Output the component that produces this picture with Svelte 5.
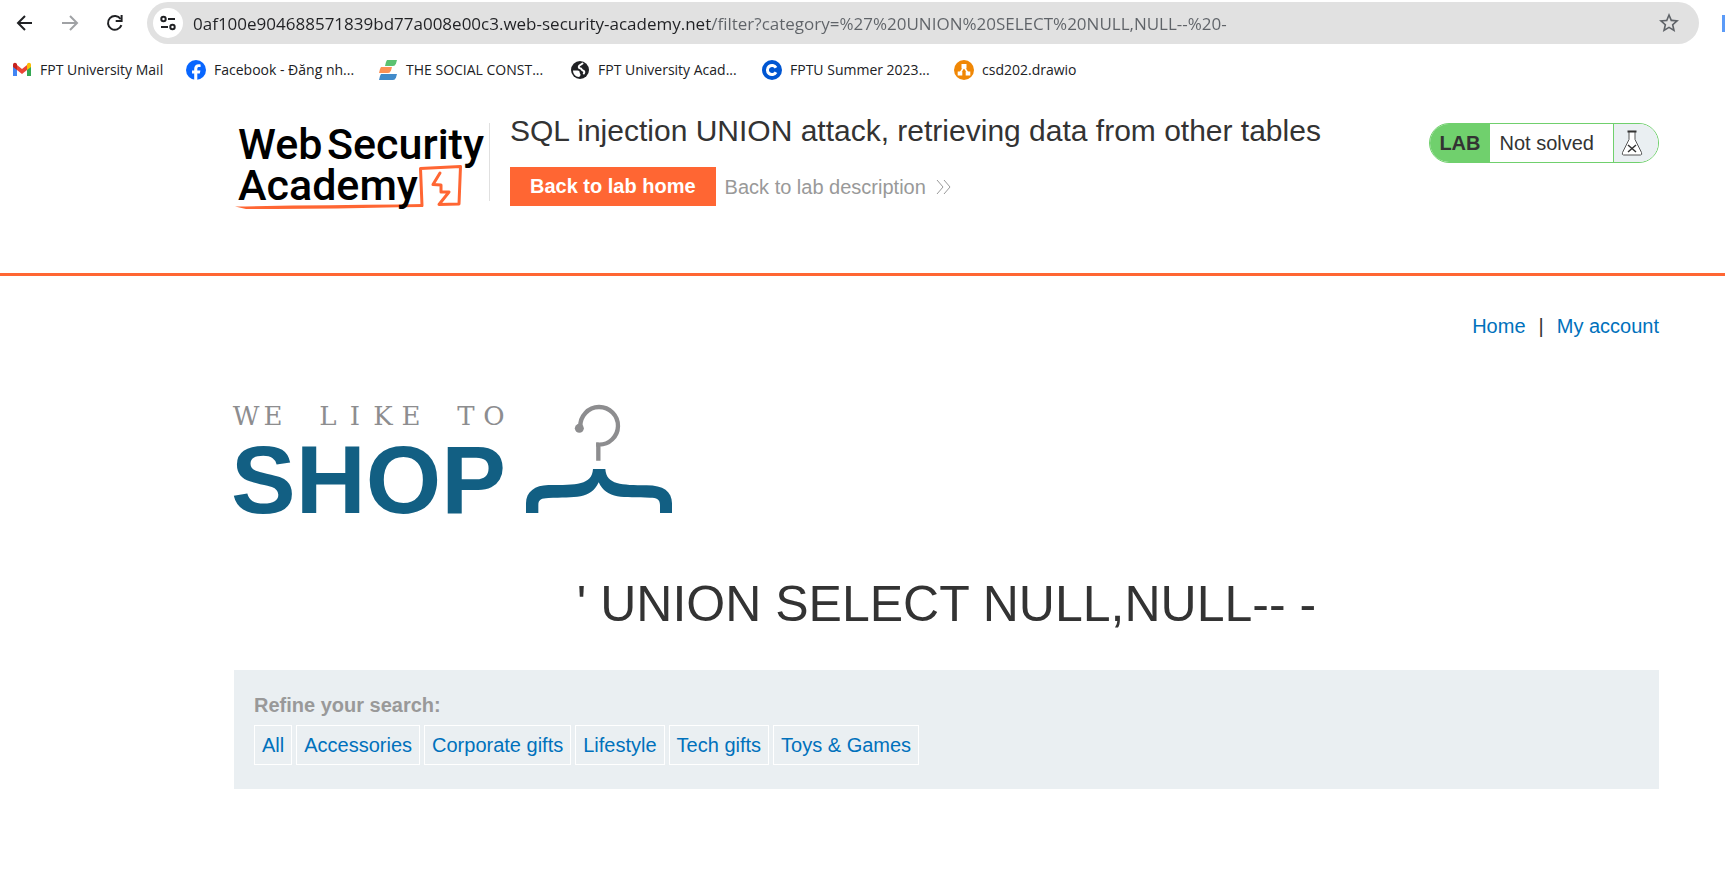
<script>
  const categories = ['All', 'Accessories', 'Corporate gifts', 'Lifestyle', 'Tech gifts', 'Toys & Games'];
  const bookmarks = [
    { icon: 'mail', label: 'FPT University Mail' },
    { icon: 'facebook', label: 'Facebook - Đăng nh...' },
    { icon: 'social', label: 'THE SOCIAL CONST...' },
    { icon: 'globe', label: 'FPT University Acad...' },
    { icon: 'course', label: 'FPTU Summer 2023...' },
    { icon: 'drawio', label: 'csd202.drawio' }
  ];
  const url = '0af100e904688571839bd77a008e00c3.web-security-academy.net/filter?category=%27%20UNION%20SELECT%20NULL,NULL--%20-';
</script>

<div class="browser">
  <div class="toolbar">
    <button class="tool" aria-label="Back">
      <svg width="18" height="18" viewBox="0 0 18 18" fill="none" stroke="#202124" stroke-width="2"><path d="M16 9H2.500M9 2 2 9l7 7" /></svg>
    </button>
    <button class="tool" aria-label="Forward">
      <svg width="18" height="18" viewBox="0 0 18 18" fill="none" stroke="#a0a2a5" stroke-width="2"><path d="M1 9h14.500M9 2l7 7-7 7" /></svg>
    </button>
    <button class="tool" aria-label="Reload">
      <svg width="18" height="18" viewBox="0 0 18 18"><path d="M15.400 11.200A6.900 6.900 0 1 1 14.600 5" fill="none" stroke="#202124" stroke-width="2" /><path d="M16.600 1v7H9.700V6h4.900V1z" fill="#202124" /></svg>
    </button>
    <div class="address">
      <button class="site" aria-label="View site information">
        <svg width="18" height="18" viewBox="0 0 18 18" fill="none" stroke="#202124" stroke-width="2"><circle cx="4.500" cy="5" r="2.200" /><path d="M9 5h7M2 13h7" /><circle cx="13.500" cy="13" r="2.200" /></svg>
      </button>
      <input class="url" aria-label="Address" value={url} />
      <button class="star" aria-label="Bookmark this page">
        <svg width="22" height="22" viewBox="1 1 22 22" fill="#5f6368"><path d="M22 9.240l-7.190-.62L12 2 9.190 8.630 2 9.240l5.460 4.730L5.820 21 12 17.270 18.180 21l-1.630-7.030L22 9.240zM12 15.400l-3.760 2.270 1-4.280-3.320-2.880 4.380-.38L12 6.100l1.710 4.040 4.380.38-3.320 2.880 1 4.280L12 15.400z" /></svg>
      </button>
    </div>
    <span class="extension"></span>
  </div>

  <nav class="bookmarks" aria-label="Bookmarks">
    {#each bookmarks as mark}
      <a href="#top">
        <svg width="20" height="20" viewBox="0 0 20 20">
          {#if mark.icon === 'mail'}
            <path d="M1 5v11h4V8z" fill="#4285f4" /><path d="M15 8v8h4V5z" fill="#34a853" />
            <path d="M5 5l5 4 5-4v5l-5 4-5-4z" fill="#ea4335" />
            <path d="M1 6V5c0-2 2-3 3.500-1.500L5 4v6L1 7z" fill="#c5221f" /><path d="M19 6V5c0-2-2-3-3.500-1.500L15 4v6l4-3z" fill="#fbbc04" />
          {:else if mark.icon === 'facebook'}
            <circle cx="10" cy="10" r="10" fill="#0866ff" />
            <path d="M8.200 20v-6.500H6v-3h2.200V9c0-3.300 1.500-4.800 4.600-4.800.6 0 1.400.1 1.800.2v2.700h-1.300c-1.500 0-2 .6-2 2v1.400h3.100l-.6 3h-2.500V20z" fill="#fff" />
          {:else if mark.icon === 'social'}
            <path d="M9 0h10l-1 3.500q-1 2.500-3 2.500H7l1-4z" fill="#5bc271" />
            <path d="M3 7h11l-1 3.500q-1 2.500-3 2.500H1l1-4z" fill="#fc9155" />
            <path d="M3 14h16l-1 3.500q-1 2.500-3 2.500H1l1-4z" fill="#428bca" />
          {:else if mark.icon === 'globe'}
            <circle cx="10" cy="10" r="9" fill="#202124" />
            <path d="M3 10.500h4.500c1.500 0 2.200.8 2.200 2s1 1.300.8 2.500-1 1.500-1.500 2C5.500 16.800 3 14 3 10.500z" fill="#fff" />
            <path d="M12.500 3.500 9.500 5.500c-1.200 1-.8 2.500.6 2.700 1.800.2 1.400 1.900 2.800 2.300 1.600.4 1.700 1.700.9 2.900" fill="none" stroke="#fff" stroke-width="2" stroke-linecap="round" />
          {:else if mark.icon === 'course'}
            <circle cx="10" cy="10" r="10" fill="#0056d2" />
            <path d="M14 7.700a4.600 4.600 0 1 0 0 4.600" fill="none" stroke="#fff" stroke-width="3" />
          {:else}
            <circle cx="10" cy="10" r="10" fill="#f08705" />
            <path d="M10 7 6 13M10 7l4 6" stroke="#fff" stroke-width="1.500" />
            <path d="M7.500 4h5v4.500h-5zM3.700 11.500h4.600v4H3.700zM11.700 11.500h4.600v4h-4.600z" fill="#fff" />
          {/if}
        </svg>
        <span>{mark.label}</span>
      </a>
    {/each}
  </nav>
</div>

<header class="lab-header">
  <a class="logo" href="#top" aria-label="Web Security Academy">
    <svg width="255" height="92" viewBox="0 0 255 92">
      <path d="M1 88.500Q90 87 165 86.500L189 86v3l-24 .3Q90 91.500 12 91z" fill="#ff6633" />
      <path d="M188 87.500 186.500 50.500 226.500 48.500 225 86 205 86.500 215 74H207V67L199 66.500 206 55" fill="none" stroke="#ff6633" stroke-width="3" stroke-linejoin="round" stroke-linecap="round" />
      <g class="wordmark">
        <text x="4" y="41">Web</text>
        <text x="93" y="41">Security</text>
        <text x="4" y="82">Academy</text>
      </g>
    </svg>
  </a>
  <div class="title">
    <h2>SQL injection UNION attack, retrieving data from other tables</h2>
    <div class="actions">
      <a class="button" href="#top">Back to lab home</a>
      <a class="description" href="#top">Back to lab description
        <svg width="15" height="16" viewBox="0 0 15 16" fill="none" stroke="#999" stroke-width="1"><path d="M1 1l6 7-6 7M8 1l6 7-6 7" /></svg>
      </a>
    </div>
  </div>
  <div class="status">
    <strong>LAB</strong>
    <span class="state">Not solved</span>
    <span class="flask">
      <svg width="22" height="26" viewBox="0 0 22 26"><path d="M8 1.500v8L1.500 22.500q-.8 2.500 1 2.500h17q1.800 0 1-2.500L14 9.500v-8" fill="#fff" stroke="#555" stroke-width="1" /><path d="M6.500 1.500h9" stroke="#333" stroke-width="2" /><path d="M7 15l8 7M15 15l-8 7" stroke="#333" stroke-width="1.500" /></svg>
    </span>
  </div>
</header>

<main>
  <nav class="account" aria-label="Account">
    <a href="#top">Home</a><span>|</span><a href="#top">My account</a>
  </nav>
  <svg class="shop" width="442" height="118" viewBox="0 0 442 118" role="img" aria-label="We like to shop">
    <text class="tagline" y="25" x="12 39 66 94 121 149 177 204 232 260">WE LIKE TO</text>
    <text class="brand" x="-3" y="113">SHOP</text>
    <g transform="translate(276 -5) scale(.33333)">
      <path d="M211 95A56.500 56.500 0 1 1 265 149V197" fill="none" stroke="#8d8d8f" stroke-width="13" />
      <path d="M258.500 142.500H266V155H258.500Z" fill="#8d8d8f" />
      <circle cx="208" cy="100" r="13.500" fill="#8d8d8f" />
      <path d="M48 354V325C48 290 75 271 115 270C200 270 246 270 249 222H286C289 270 335 270 410 271C460 271 486 290 486 325V354H450V330C450 313 440 308 420 308C340 306 290 314 266 262C243 314 195 306 115 309C95 310 85 313 85 330V354Z" fill="#125f83" />
    </g>
  </svg>
  <h1>' UNION SELECT NULL,NULL-- -</h1>
  <section class="filters">
    <strong>Refine your search:</strong>
    <div class="tags">
      {#each categories as category}
        <a href="#top">{category}</a>
      {/each}
    </div>
  </section>
</main>

<style>
  :global(body) {
    background: #fff;
    color: #333;
    font: 20px/24px "Liberation Sans", Arial, sans-serif;
  }
  a { color: #0071bc; text-decoration: none; }
  button { padding: 0; border: 0; background: none; display: grid; place-items: center; }

  .browser { font-family: "Open Sans", sans-serif; color: #202124; }
  .toolbar { display: flex; align-items: center; gap: 11px; height: 42px; padding: 2px 0 0 8px; }
  .tool { width: 34px; height: 34px; flex: none; }
  .address { flex: 1; display: flex; align-items: center; height: 42px; margin-left: 4px; padding: 0 19px 0 6px; border-radius: 21px; background: #e1e1e1; box-sizing: border-box; }
  .site { width: 30px; height: 30px; border-radius: 50%; background: #fff; flex: none; }
  .url {
    flex: 1;
    min-width: 0;
    height: 32px;
    margin-left: 10px;
    padding: 0;
    border: 0;
    outline: 0;
    font: 17px/24px "Open Sans", sans-serif;
    color: transparent;
    background: linear-gradient(90deg, #202124 519px, #5f6368 519px);
    -webkit-background-clip: text;
    background-clip: text;
  }
  .star { width: 22px; height: 22px; }
  .extension { width: 3px; height: 17px; margin-left: 12px; background: #5b9bf8; }

  .bookmarks { display: grid; grid-template-columns: 174px repeat(5, 192px); height: 52px; padding-left: 12px; }
  .bookmarks a { display: flex; align-items: center; gap: 8px; color: #202124; font-size: 14px; line-height: 20px; white-space: nowrap; }

  .lab-header { display: flex; align-items: flex-start; height: 155px; padding: 22px 66px 0 234px; border-bottom: 3px solid #ff6633; }
  .logo { flex: none; height: 78px; margin-top: 5px; border-right: 1px solid #e0e0e0; }
  .logo svg { display: block; overflow: visible; margin-top: -5px; }
  .wordmark { font: 500 43px Roboto, sans-serif; fill: #000; }
  .title { flex: 1; margin-left: 20px; }
  h2 { margin: 0; font-size: 30px; line-height: 26px; font-weight: 400; }
  .actions { display: flex; align-items: center; gap: 9px; margin-top: 23px; }
  .button { padding: 0 20px; background: #ff6633; color: #fff; font-weight: 700; line-height: 39px; }
  .description { display: flex; align-items: center; gap: 10px; color: #999; }
  .status { display: flex; height: 38px; margin-top: 5px; border: 1px solid #70d06d; border-radius: 20px; overflow: hidden; line-height: 38px; }
  .status strong { padding: 0 9px; background: #70d06d; }
  .state { padding: 0 19px 0 10px; border-right: 1px solid #70d06d; }
  .flask { display: flex; align-items: center; padding: 0 15px 0 7px; background: #eaeff2; }

  main { padding: 38px 66px 90px 234px; }
  .account { display: flex; justify-content: flex-end; gap: 13px; }
  .shop { display: block; margin-top: 62px; overflow: visible; }
  .tagline { font: 26px "DejaVu Serif", serif; fill: #8d8d8f; text-anchor: middle; }
  .brand { font: 700 97px "Liberation Sans", Arial, sans-serif; fill: #125f83; }
  h1 { margin: 56px 0 36px; font-size: 50px; line-height: 60px; font-weight: 400; text-align: center; }
  .filters { padding: 23px 20px 24px; background: #eaeff2; }
  .filters strong { color: #999; }
  .tags { display: flex; gap: 4px; margin-top: 8px; }
  .tags a { padding: 7px; border: 1px solid #fff; }
</style>
